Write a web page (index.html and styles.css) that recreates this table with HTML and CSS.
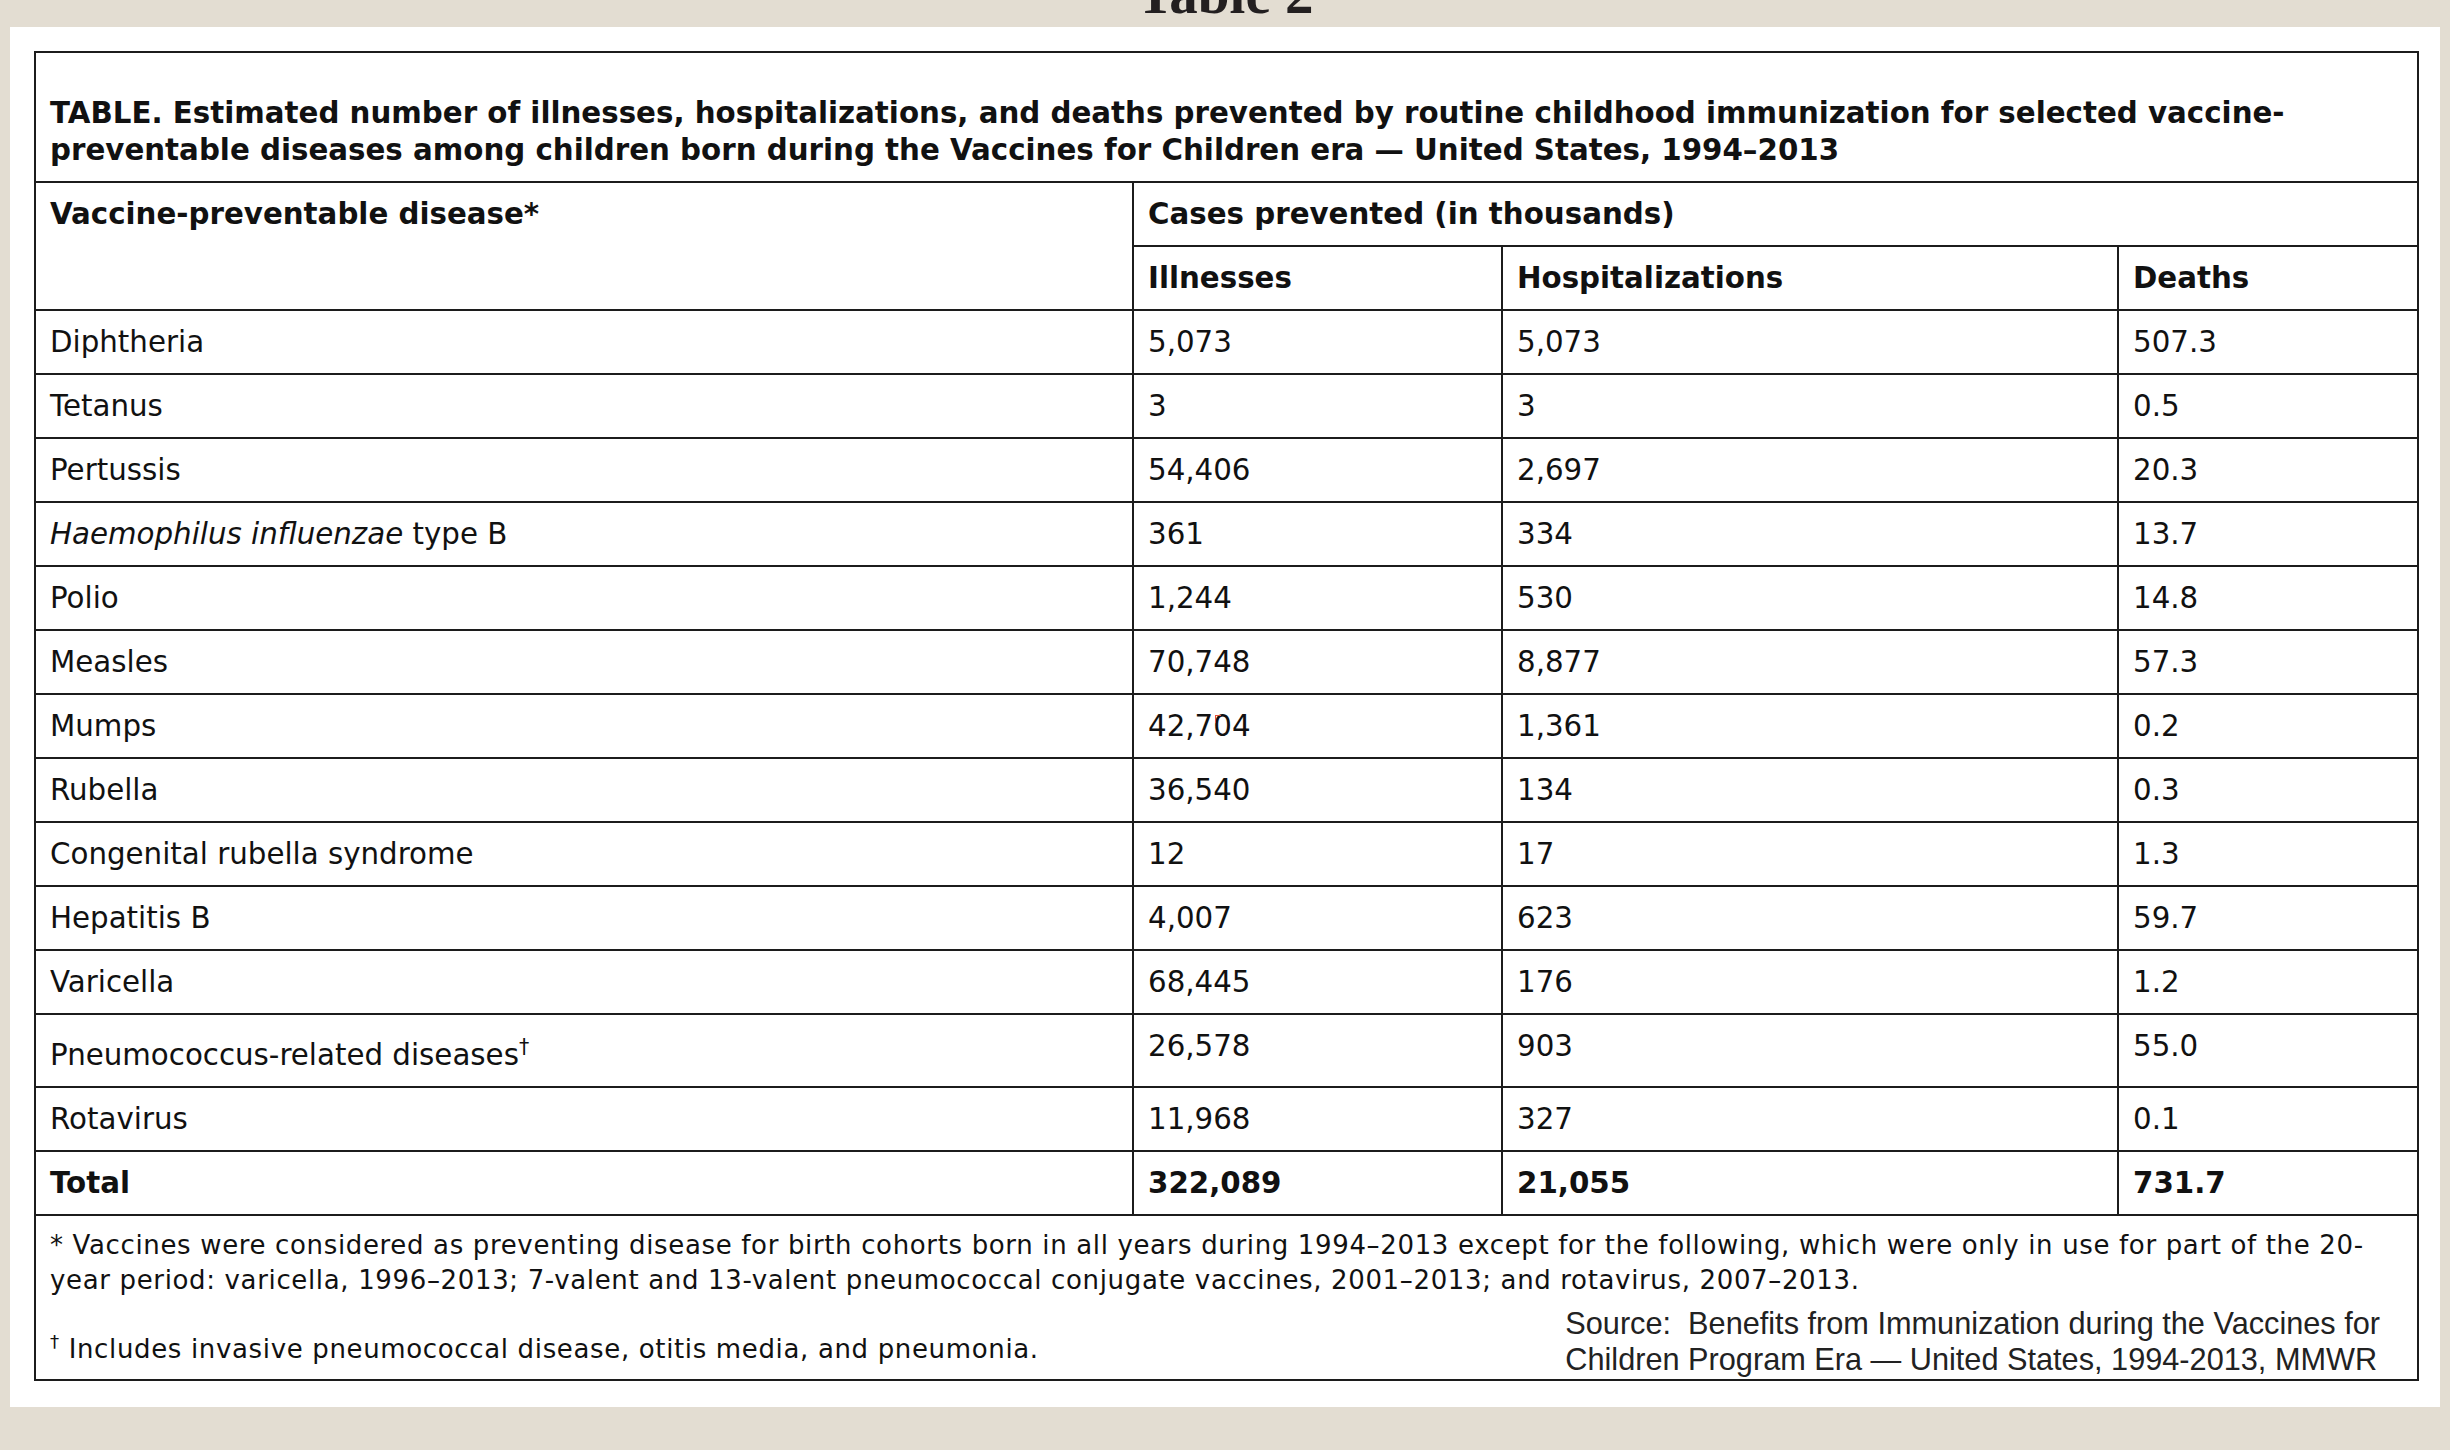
FILE: index.html
```html
<!DOCTYPE html>
<html>
<head>
	<meta http-equiv="Content-Type" content="text/html; charset=utf-8">
	<link rel="stylesheet" href="styles.css">
</head>
<body>
	<h1 class="page-title">Table 2</h1>
	<div class="sheet">
		<table class="vfc">
			<colgroup>
				<col class="w-name">
				<col class="w-ill">
				<col class="w-hosp">
				<col class="w-death">
			</colgroup>
			<thead>
				<tr>
					<th colspan="4" class="caption">TABLE. Estimated number of illnesses, hospitalizations, and deaths prevented by routine childhood immunization for selected vaccine-<br>preventable diseases among children born during the Vaccines for Children era &mdash; United States, 1994&ndash;2013</th>
				</tr>
				<tr>
					<th rowspan="2">Vaccine-preventable disease*</th>
					<th colspan="3">Cases prevented (in thousands)</th>
				</tr>
				<tr>
					<th>Illnesses</th>
					<th>Hospitalizations</th>
					<th>Deaths</th>
				</tr>
			</thead>
			<tbody>
				<tr><td>Diphtheria</td><td>5,073</td><td>5,073</td><td>507.3</td></tr>
				<tr><td>Tetanus</td><td>3</td><td>3</td><td>0.5</td></tr>
				<tr><td>Pertussis</td><td>54,406</td><td>2,697</td><td>20.3</td></tr>
				<tr><td><i>Haemophilus influenzae</i> type B</td><td>361</td><td>334</td><td>13.7</td></tr>
				<tr><td>Polio</td><td>1,244</td><td>530</td><td>14.8</td></tr>
				<tr><td>Measles</td><td>70,748</td><td>8,877</td><td>57.3</td></tr>
				<tr><td>Mumps</td><td>42,7<span class="mark">0</span>4</td><td>1,361</td><td>0.2</td></tr>
				<tr><td>Rubella</td><td>36,540</td><td>134</td><td>0.3</td></tr>
				<tr><td>Congenital rubella syndrome</td><td>12</td><td>17</td><td>1.3</td></tr>
				<tr><td>Hepatitis B</td><td>4,007</td><td>623</td><td>59.7</td></tr>
				<tr><td>Varicella</td><td>68,445</td><td>176</td><td>1.2</td></tr>
				<tr class="pneumo"><td>Pneumococcus-related diseases<sup>&dagger;</sup></td><td>26,578</td><td>903</td><td>55.0</td></tr>
				<tr><td>Rotavirus</td><td>11,968</td><td>327</td><td>0.1</td></tr>
				<tr class="total"><td>Total</td><td>322,089</td><td>21,055</td><td>731.7</td></tr>
			</tbody>
			<tfoot>
				<tr>
					<td colspan="4" class="notes">
						<p class="note">* Vaccines were considered as preventing disease for birth cohorts born in all years during 1994&ndash;2013 except for the following, which were only in use for part of the 20-<br>year period: varicella, 1996&ndash;2013; 7-valent and 13-valent pneumococcal conjugate vaccines, 2001&ndash;2013; and rotavirus, 2007&ndash;2013.</p>
						<div class="note-foot">
							<p class="note dagger"><sup>&dagger;</sup> Includes invasive pneumococcal disease, otitis media, and pneumonia.</p>
							<p class="source">Source:&nbsp; Benefits from Immunization during the Vaccines for<br>Children Program Era &mdash; United States, 1994-2013, MMWR</p>
						</div>
					</td>
				</tr>
			</tfoot>
		</table>
	</div>
</body>
</html>
```

FILE: styles.css
```css
*{margin:0;padding:0;}
body{
	background:#e3ddd2;
	font-family:"DejaVu Sans",Verdana,sans-serif;
	color:#111;
}
.page-title{
	margin:-35px 0 5px;
	height:57px;
	line-height:57px;
	text-align:center;
	font-family:"Liberation Serif","Times New Roman",serif;
	font-size:57px;
	font-weight:bold;
	color:#231f20;
}
.sheet{
	margin:0 10px;
	width:2430px;
	height:1380px;
	box-sizing:border-box;
	padding:24px 23px 0 24px;
	background:#fff;
}
.vfc{
	width:2383px;
	table-layout:fixed;
	border-collapse:collapse;
	font-size:29.3px;
	line-height:37px;
}
.w-name{width:1098px;}
.w-ill{width:369px;}
.w-hosp{width:616px;}
.w-death{width:300px;}

.vfc th,.vfc td{
	border:2px solid #1c1c1c;
	padding:13px 13px 12px 14px;
	text-align:left;
	vertical-align:top;
	white-space:nowrap;
}
.vfc th{font-weight:bold;}
.vfc th.caption{
	padding-top:42px;
	padding-bottom:12px;
}
.vfc sup{
	font-size:70%;
	line-height:0;
	vertical-align:super;
}
.pneumo td:first-child{
	padding-top:22px;
}
.total td{font-weight:bold;}
.mark{
	position:relative;
}
.mark:before{
	content:"";
	position:absolute;
	left:2px;
	top:6px;
	width:5px;
	height:7px;
	border-left:1px solid #e0503c;
	border-top:1px solid #e0503c;
}

.vfc td.notes{
	padding:12px 37px 1px 14px;
}
.note{
	font-size:26px;
	letter-spacing:0.65px;
	line-height:35px;
}
.note-foot{
	display:flex;
	justify-content:space-between;
	align-items:flex-end;
	margin-top:8px;
}
.dagger{
	margin-bottom:11px;
}
.source{
	font-family:"Liberation Sans",Arial,sans-serif;
	font-size:30.7px;
	line-height:36px;
	color:#222;
}
```
